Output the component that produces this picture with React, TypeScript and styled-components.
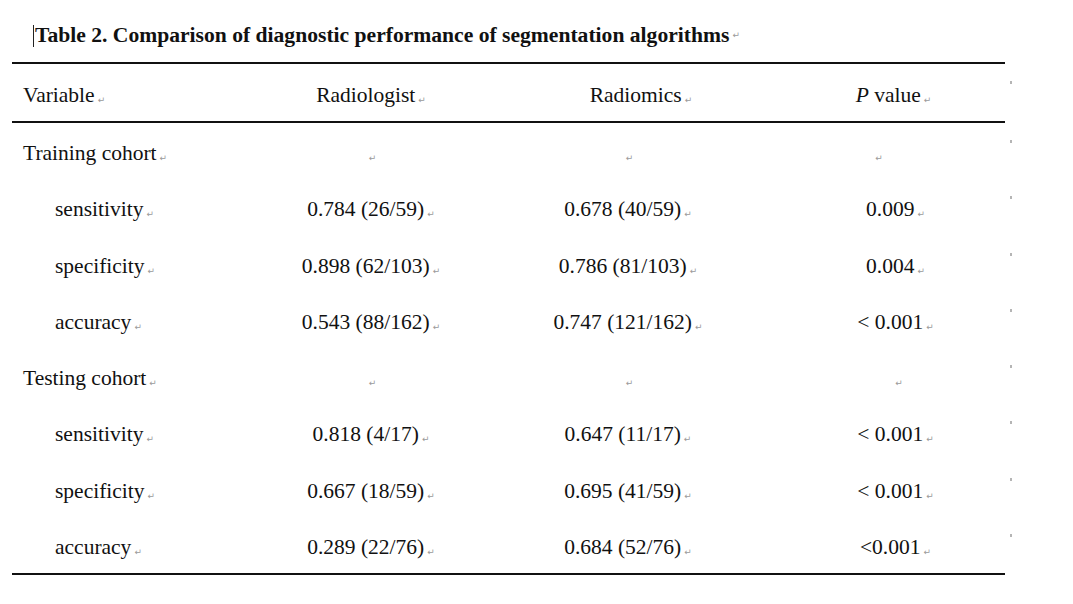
import React from "react";
import styled, { createGlobalStyle } from "styled-components";

const Global = createGlobalStyle`
  html, body { margin: 0; padding: 0; background: #fff; }
  body { font-family: "Liberation Serif", "Times New Roman", serif; color: #111; }
`;

const Page = styled.div`
  width: 1073px;
  height: 604px;
  padding: 24px 0 0 12px;
  box-sizing: border-box;
  position: relative;
`;

const Title = styled.div`
  display: flex;
  align-items: center;
  padding-left: 21px;
  height: 23px;
  font-size: 21.6px;
  font-weight: bold;
  line-height: 23px;
  white-space: nowrap;
`;

const Cursor = styled.span`
  display: inline-block;
  width: 1px;
  height: 22px;
  background: #222;
  margin-right: 1px;
`;

const Mark = styled.span`
  font-family: "DejaVu Sans", sans-serif;
  font-weight: normal;
  font-style: normal;
  font-size: 9px;
  color: #9a9a9a;
  margin-left: 3px;
  vertical-align: -1px;
`;

const Table = styled.div`
  margin-top: 15px;
  width: 993px;
  border-top: 2px solid #111;
  border-bottom: 2px solid #111;
  position: relative;
`;

const Row = styled.div<{ $header?: boolean }>`
  display: grid;
  grid-template-columns: 240px 238px 276px 239px;
  height: ${(p) => (p.$header ? "57px" : "56.25px")};
  align-items: center;
  font-size: 21.5px;
  line-height: 23px;
  border-bottom: ${(p) => (p.$header ? "2px solid #111" : "none")};
  position: relative;
`;

const Cell = styled.div<{ $indent?: boolean; $left?: boolean; $shift?: number }>`
  text-align: ${(p) => (p.$left ? "left" : "center")};
  padding-left: ${(p) => (p.$left ? (p.$indent ? "43px" : "11px") : "0")};
  padding-top: 10px;
  white-space: nowrap;
  transform: translateX(${(p) => p.$shift ?? 0}px);
`;

const RowEnd = styled.span`
  position: absolute;
  right: -7px;
  top: 17px;
  width: 2px;
  height: 3px;
  background: #b5b5b5;
`;

const Italic = styled.i`
  font-style: italic;
`;

type R = { label: string; indent?: boolean; a?: string; b?: string; c?: string };

const rows: R[] = [
  { label: "Training cohort" },
  { label: "sensitivity", indent: true, a: "0.784 (26/59)", b: "0.678 (40/59)", c: "0.009" },
  { label: "specificity", indent: true, a: "0.898 (62/103)", b: "0.786 (81/103)", c: "0.004" },
  { label: "accuracy", indent: true, a: "0.543 (88/162)", b: "0.747 (121/162)", c: "< 0.001" },
  { label: "Testing cohort" },
  { label: "sensitivity", indent: true, a: "0.818 (4/17)", b: "0.647 (11/17)", c: "< 0.001" },
  { label: "specificity", indent: true, a: "0.667 (18/59)", b: "0.695 (41/59)", c: "< 0.001" },
  { label: "accuracy", indent: true, a: "0.289 (22/76)", b: "0.684 (52/76)", c: "<0.001" },
];

const M = () => <Mark>↵</Mark>;

export default function App() {
  return (
    <>
      <Global />
      <Page>
        <Title>
          <Cursor />
          Table 2. Comparison of diagnostic performance of segmentation algorithms
          <M />
        </Title>
        <Table>
          <Row $header>
            <Cell $left>
              Variable
              <M />
            </Cell>
            <Cell>
              Radiologist
              <M />
            </Cell>
            <Cell $shift={13}>
              Radiomics
              <M />
            </Cell>
            <Cell $shift={8}>
              <Italic>P</Italic> value
              <M />
            </Cell>
            <RowEnd />
          </Row>
          {rows.map((r, i) => (
            <Row key={i}>
              <Cell $left $indent={r.indent}>
                {r.label}
                <M />
              </Cell>
              <Cell>
                {r.a}
                <M />
              </Cell>
              <Cell>
                {r.b}
                <M />
              </Cell>
              <Cell $shift={r.c ? 10 : i === 0 ? -8 : 12}>
                {r.c}
                <M />
              </Cell>
              <RowEnd />
            </Row>
          ))}
        </Table>
      </Page>
    </>
  );
}
